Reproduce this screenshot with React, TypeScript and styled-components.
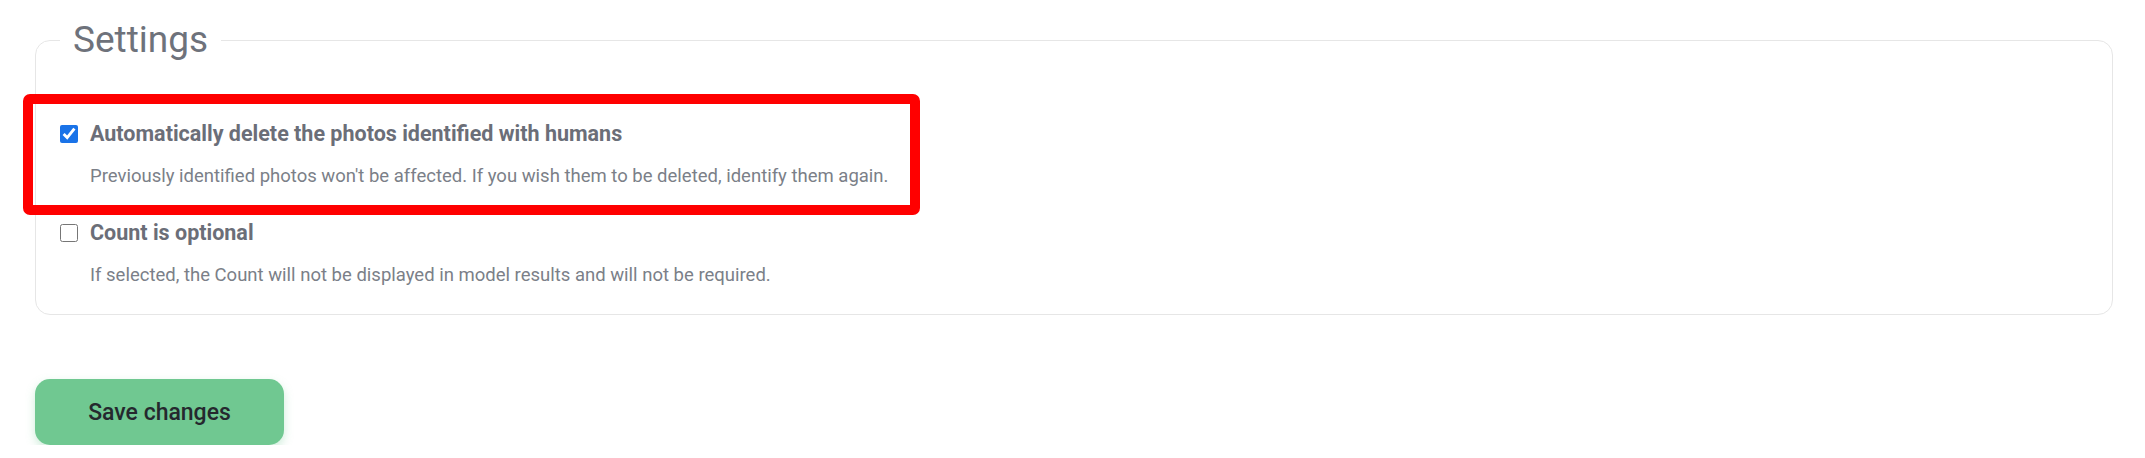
import React from "react";
import styled, { createGlobalStyle } from "styled-components";

const GlobalStyle = createGlobalStyle`
	html, body {
		margin: 0;
		padding: 0;
		background: #ffffff;
	}
	body {
		font-family: Roboto, "Liberation Sans", sans-serif;
	}
`;

const Page = styled.div`
	position: relative;
	padding: 18px 32px 0 35px;
`;

const Fieldset = styled.fieldset`
	margin: 0;
	border: 1px solid #e6e6e6;
	border-radius: 15px;
	padding: 57px 24px 27px 24px;
	min-width: 0;
`;

const Legend = styled.legend`
	margin: 0;
	padding: 0 13px;
	font-size: 37px;
	line-height: 44px;
	font-weight: 400;
	color: #6e727b;
`;

const OptionList = styled.div`
	display: flex;
	flex-direction: column;
	gap: 30px;
`;

const Option = styled.label`
	display: grid;
	grid-template-columns: 18px 1fr;
	column-gap: 12px;
	row-gap: 15px;
	align-items: center;
	cursor: pointer;
`;

const Checkbox = styled.input.attrs({ type: "checkbox" })`
	width: 18px;
	height: 18px;
	margin: 0;
	accent-color: #1a73e8;
`;

const OptionTitle = styled.span`
	font-size: 21.5px;
	line-height: 30px;
	font-weight: 700;
	color: #6b6e78;
`;

const OptionHint = styled.span`
	grid-column: 2;
	font-size: 18.5px;
	line-height: 24px;
	color: #7b7f88;
`;

const SaveButton = styled.button`
	margin-top: 64px;
	width: 249px;
	height: 66px;
	border: none;
	border-radius: 15px;
	background: #70c891;
	color: #25282e;
	font-family: Roboto, "Liberation Sans", sans-serif;
	font-size: 23px;
	font-weight: 500;
	box-shadow: 0 4px 10px rgba(112, 200, 145, 0.35);
	cursor: pointer;
`;

const Highlight = styled.div`
	position: absolute;
	left: 23px;
	top: 94px;
	width: 897px;
	height: 121px;
	box-sizing: border-box;
	border: 10px solid #ff0000;
	border-radius: 7px;
	pointer-events: none;
`;

interface ISettingOption {
	title: string;
	hint: string;
	checked: boolean;
}

const options: ISettingOption[] = [
	{
		title: "Automatically delete the photos identified with humans",
		hint: "Previously identified photos won't be affected. If you wish them to be deleted, identify them again.",
		checked: true,
	},
	{
		title: "Count is optional",
		hint: "If selected, the Count will not be displayed in model results and will not be required.",
		checked: false,
	},
];

export default () => {
	return (
		<Page>
			<GlobalStyle />
			<Fieldset>
				<Legend>Settings</Legend>
				<OptionList>
					{options.map((o) => (
						<Option key={o.title}>
							<Checkbox defaultChecked={o.checked} />
							<OptionTitle>{o.title}</OptionTitle>
							<OptionHint>{o.hint}</OptionHint>
						</Option>
					))}
				</OptionList>
			</Fieldset>
			<SaveButton>Save changes</SaveButton>
			<Highlight />
		</Page>
	);
};
